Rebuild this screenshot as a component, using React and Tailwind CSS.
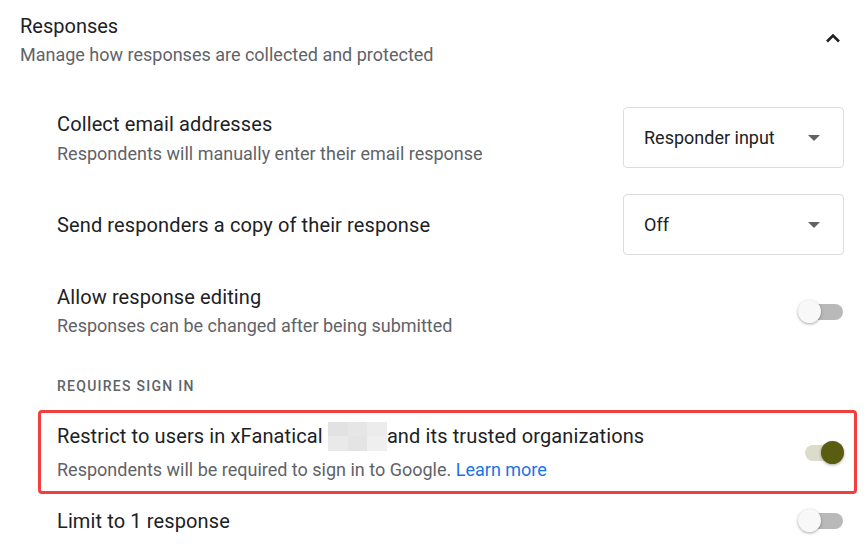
import React from "react";

function Toggle({ on }) {
  return (
    <div className="relative w-[46px] h-[24px] flex items-center shrink-0">
      <div
        className={
          "absolute right-[1px] w-[38px] h-[16px] rounded-full " +
          (on ? "bg-[#dcdccb]" : "bg-[#b9b9b9]")
        }
      />
      <div
        className={
          "absolute w-[23px] h-[23px] rounded-full shadow-[0_1px_3px_rgba(0,0,0,0.35)] " +
          (on ? "right-0 bg-[#5a5c0f]" : "left-0 bg-[#f8f8f8]")
        }
      />
    </div>
  );
}

function Dropdown({ value }) {
  return (
    <div className="w-[221px] h-[61px] shrink-0 border border-[#dadce0] rounded-[4px] flex items-center justify-between pl-[20px] pr-[23px]">
      <span className="text-[18px] text-[#202124]">{value}</span>
      <svg width="12" height="6" viewBox="0 0 12 6">
        <path d="M0 0 L12 0 L6 6 Z" fill="#5f6368" />
      </svg>
    </div>
  );
}

function Blur() {
  const cells = [
    "bg-[#e2e2e2]",
    "bg-[#e6e6e6]",
    "bg-[#ececec]",
    "bg-[#e9e9e9]",
    "bg-[#e4e4e4]",
    "bg-[#efefef]",
  ];
  return (
    <span className="inline-grid grid-cols-3 w-[59px] h-[29px] align-middle -mt-[3px]">
      {cells.map((c, i) => (
        <span key={i} className={c} />
      ))}
    </span>
  );
}

export default function App() {
  return (
    <div
      className="w-[865px] h-[550px] bg-white overflow-hidden"
      style={{ fontFamily: "Roboto, 'Noto Sans', sans-serif" }}
    >
      {/* Header */}
      <div className="flex items-start justify-between pl-[20px] pr-[24px]">
        <div>
          <div className="mt-[14px] text-[20px] leading-[24px] text-[#202124]">Responses</div>
          <div className="mt-[5px] text-[18px] leading-[24px] text-[#5f6368]">
            Manage how responses are collected and protected
          </div>
        </div>
        <svg width="16" height="12" viewBox="0 0 16 12" className="mt-[32px]">
          <path d="M2 9.5 L8 3.5 L14 9.5" fill="none" stroke="#202124" strokeWidth="2.6" />
        </svg>
      </div>

      <div className="pl-[38px] pr-[8px]">
        {/* Row 1 */}
        <div className="mt-[40px] flex items-center justify-between pl-[19px] pr-[13px]">
          <div className="pt-[2px]">
            <div className="text-[20px] leading-[24px] tracking-[0.12px] text-[#202124]">Collect email addresses</div>
            <div className="mt-[6px] text-[18px] leading-[24px] text-[#5f6368]">
              Respondents will manually enter their email response
            </div>
          </div>
          <Dropdown value="Responder input" />
        </div>

        {/* Row 2 */}
        <div className="mt-[26px] flex items-center justify-between pl-[19px] pr-[13px]">
          <div className="text-[20px] leading-[24px] tracking-[0.12px] text-[#202124]">
            Send responders a copy of their response
          </div>
          <Dropdown value="Off" />
        </div>

        {/* Row 3 */}
        <div className="mt-[30px] flex items-center justify-between pl-[19px] pr-[13px]">
          <div>
            <div className="text-[20px] leading-[24px] tracking-[0.12px] text-[#202124]">Allow response editing</div>
            <div className="mt-[5px] text-[18px] leading-[24px] text-[#5f6368]">
              Responses can be changed after being submitted
            </div>
          </div>
          <Toggle on={false} />
        </div>

        {/* Section label */}
        <div className="mt-[38px] pl-[19px] text-[14px] leading-[20px] font-medium tracking-[0.09em] text-[#5f6368]">
          REQUIRES SIGN IN
        </div>

        {/* Highlighted row */}
        <div className="mt-[14px] border-[3px] border-[#ef3f3f] rounded-[4px] flex items-center justify-between pl-[16px] pr-[10px] pt-[11px] pb-[9px]">
          <div>
            <div className="text-[20px] leading-[24px] tracking-[0.12px] text-[#202124] whitespace-nowrap">
              Restrict to users in xFanatical <Blur />and its trusted organizations
            </div>
            <div className="mt-[7px] text-[18px] leading-[24px] text-[#5f6368]">
              Respondents will be required to sign in to Google.{" "}
              <span className="text-[#1a73e8]">Learn more</span>
            </div>
          </div>
          <Toggle on={true} />
        </div>

        {/* Row last */}
        <div className="mt-[15px] flex items-center justify-between pl-[19px] pr-[13px]">
          <div className="text-[20px] leading-[24px] tracking-[0.12px] text-[#202124]">Limit to 1 response</div>
          <Toggle on={false} />
        </div>
      </div>
    </div>
  );
}
